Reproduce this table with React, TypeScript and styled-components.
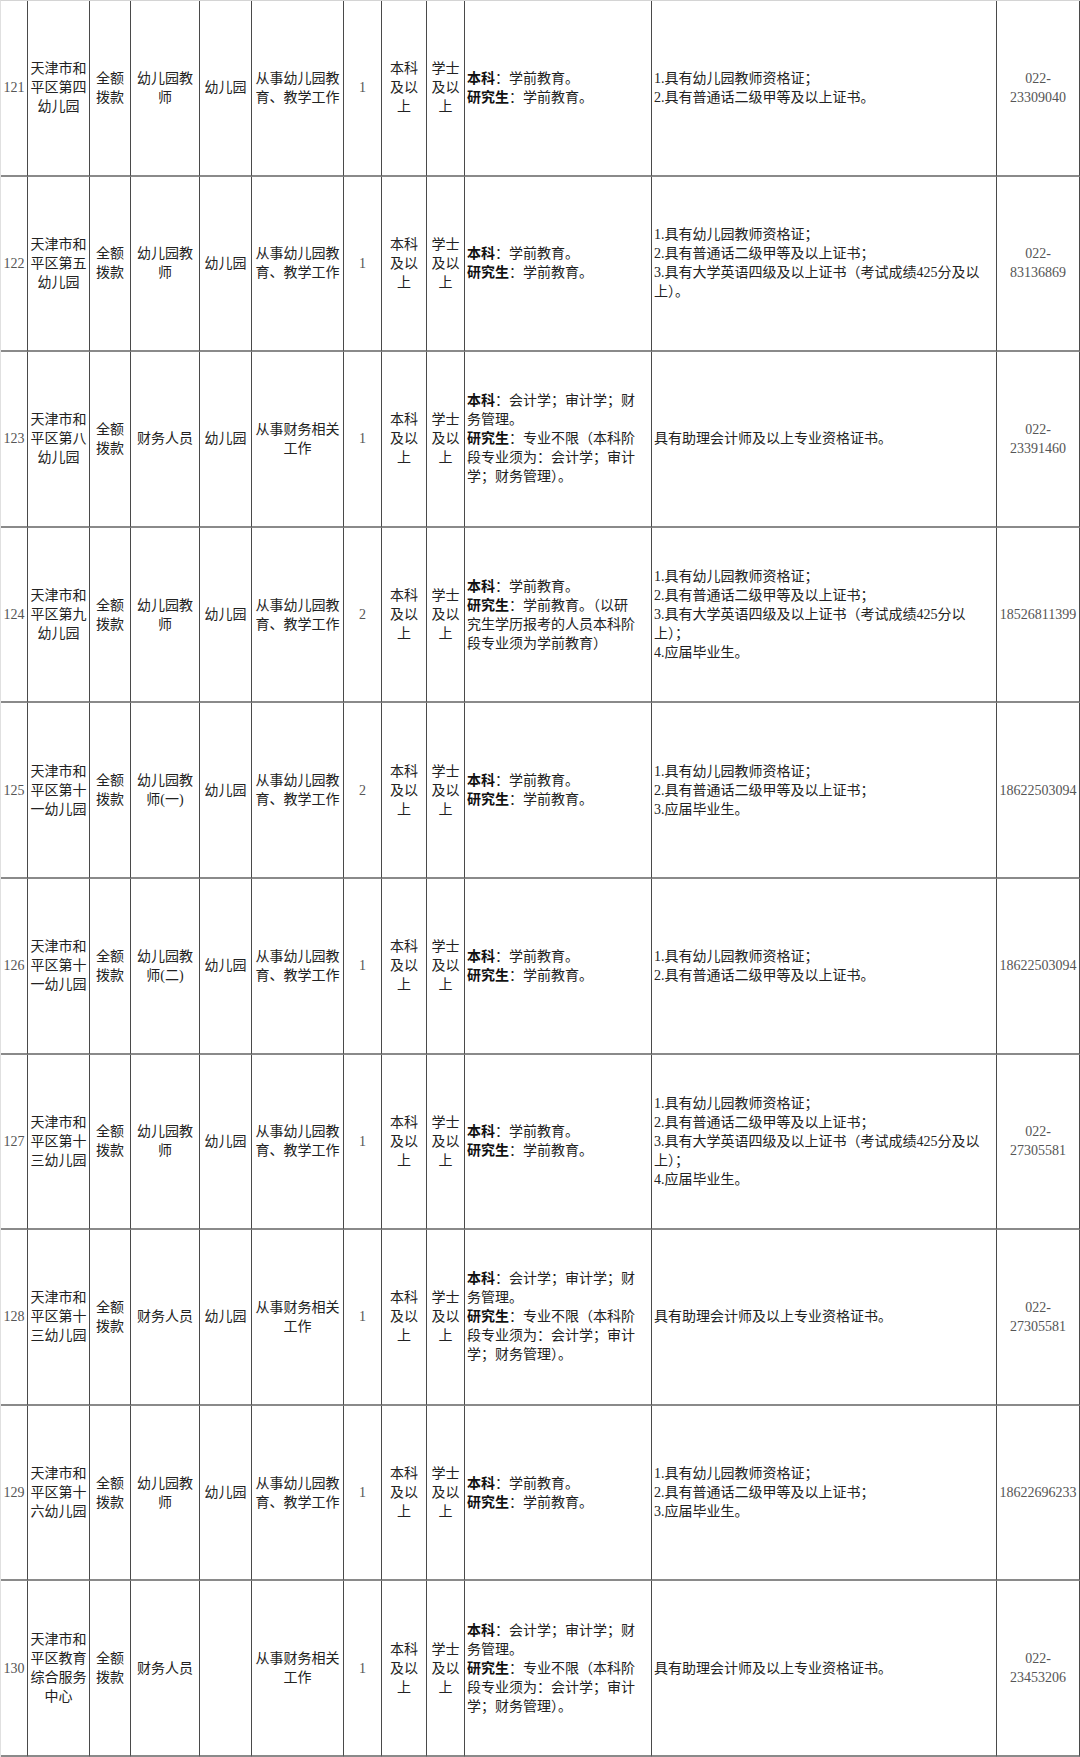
import React from "react";
import styled, { createGlobalStyle } from "styled-components";

const GlobalStyle = createGlobalStyle`
  html, body {
    margin: 0;
    padding: 0;
    background: #fff;
  }
  body {
    font-family: "Liberation Serif", "Noto Sans CJK SC", serif;
    color: #222;
  }
`;

const Table = styled.div`
  display: grid;
  grid-template-columns: 27px 62px 41px 69px 52px 92px 38px 45px 38px 187px 345px 83px;
  grid-template-rows: repeat(10, 1fr);
  width: 1080px;
  height: 1757px;
  box-sizing: border-box;
  border-top: 1px solid #d4d4d4;
  border-left: 1px solid #e0e0e0;
`;

const Cell = styled.div<{ $align?: "left" | "center"; $num?: boolean }>`
  display: flex;
  align-items: center;
  justify-content: ${({ $align }) => ($align === "left" ? "flex-start" : "center")};
  text-align: ${({ $align }) => ($align === "left" ? "left" : "center")};
  box-sizing: border-box;
  padding: 0 ${({ $align }) => ($align === "left" ? "2px" : "1px")};
  border-right: 1.5px solid #4a4a4a;
  border-bottom: 2px solid #8a8a8a;
  font-size: 14px;
  line-height: 19px;
  color: ${({ $num }) => ($num ? "#555" : "#222")};
  white-space: pre-line;
  overflow: hidden;
`;

const B = styled.b`
  font-weight: 700;
  color: #111;
`;

type Row = {
  no: string;
  org: string;
  kind: string;
  post: string;
  unit: string;
  duty: string;
  count: string;
  edu: string;
  degree: string;
  major: React.ReactNode;
  other: string;
  phone: string;
};

const teachMajor = (
  <span>
    <B>本科</B>：学前教育。{"\n"}
    <B>研究生</B>：学前教育。
  </span>
);

const financeMajor = (
  <span>
    <B>本科</B>：会计学；审计学；财{"\n"}务管理。{"\n"}
    <B>研究生</B>：专业不限（本科阶{"\n"}段专业须为：会计学；审计{"\n"}学；财务管理）。
  </span>
);

const teachDuty = "从事幼儿园教\n育、教学工作";
const financeDuty = "从事财务相关\n工作";
const financeOther = "具有助理会计师及以上专业资格证书。";
const edu = "本科\n及以\n上";
const degree = "学士\n及以\n上";

const rows: Row[] = [
  {
    no: "121",
    org: "天津市和\n平区第四\n幼儿园",
    kind: "全额\n拨款",
    post: "幼儿园教\n师",
    unit: "幼儿园",
    duty: teachDuty,
    count: "1",
    edu,
    degree,
    major: teachMajor,
    other: "1.具有幼儿园教师资格证；\n2.具有普通话二级甲等及以上证书。",
    phone: "022-\n23309040",
  },
  {
    no: "122",
    org: "天津市和\n平区第五\n幼儿园",
    kind: "全额\n拨款",
    post: "幼儿园教\n师",
    unit: "幼儿园",
    duty: teachDuty,
    count: "1",
    edu,
    degree,
    major: teachMajor,
    other:
      "1.具有幼儿园教师资格证；\n2.具有普通话二级甲等及以上证书；\n3.具有大学英语四级及以上证书（考试成绩425分及以\n上）。",
    phone: "022-\n83136869",
  },
  {
    no: "123",
    org: "天津市和\n平区第八\n幼儿园",
    kind: "全额\n拨款",
    post: "财务人员",
    unit: "幼儿园",
    duty: financeDuty,
    count: "1",
    edu,
    degree,
    major: financeMajor,
    other: financeOther,
    phone: "022-\n23391460",
  },
  {
    no: "124",
    org: "天津市和\n平区第九\n幼儿园",
    kind: "全额\n拨款",
    post: "幼儿园教\n师",
    unit: "幼儿园",
    duty: teachDuty,
    count: "2",
    edu,
    degree,
    major: (
      <span>
        <B>本科</B>：学前教育。{"\n"}
        <B>研究生</B>：学前教育。（以研{"\n"}究生学历报考的人员本科阶{"\n"}段专业须为学前教育）
      </span>
    ),
    other:
      "1.具有幼儿园教师资格证；\n2.具有普通话二级甲等及以上证书；\n3.具有大学英语四级及以上证书（考试成绩425分以\n上）；\n4.应届毕业生。",
    phone: "18526811399",
  },
  {
    no: "125",
    org: "天津市和\n平区第十\n一幼儿园",
    kind: "全额\n拨款",
    post: "幼儿园教\n师(一)",
    unit: "幼儿园",
    duty: teachDuty,
    count: "2",
    edu,
    degree,
    major: teachMajor,
    other: "1.具有幼儿园教师资格证；\n2.具有普通话二级甲等及以上证书；\n3.应届毕业生。",
    phone: "18622503094",
  },
  {
    no: "126",
    org: "天津市和\n平区第十\n一幼儿园",
    kind: "全额\n拨款",
    post: "幼儿园教\n师(二)",
    unit: "幼儿园",
    duty: teachDuty,
    count: "1",
    edu,
    degree,
    major: teachMajor,
    other: "1.具有幼儿园教师资格证；\n2.具有普通话二级甲等及以上证书。",
    phone: "18622503094",
  },
  {
    no: "127",
    org: "天津市和\n平区第十\n三幼儿园",
    kind: "全额\n拨款",
    post: "幼儿园教\n师",
    unit: "幼儿园",
    duty: teachDuty,
    count: "1",
    edu,
    degree,
    major: teachMajor,
    other:
      "1.具有幼儿园教师资格证；\n2.具有普通话二级甲等及以上证书；\n3.具有大学英语四级及以上证书（考试成绩425分及以\n上）；\n4.应届毕业生。",
    phone: "022-\n27305581",
  },
  {
    no: "128",
    org: "天津市和\n平区第十\n三幼儿园",
    kind: "全额\n拨款",
    post: "财务人员",
    unit: "幼儿园",
    duty: financeDuty,
    count: "1",
    edu,
    degree,
    major: financeMajor,
    other: financeOther,
    phone: "022-\n27305581",
  },
  {
    no: "129",
    org: "天津市和\n平区第十\n六幼儿园",
    kind: "全额\n拨款",
    post: "幼儿园教\n师",
    unit: "幼儿园",
    duty: teachDuty,
    count: "1",
    edu,
    degree,
    major: teachMajor,
    other: "1.具有幼儿园教师资格证；\n2.具有普通话二级甲等及以上证书；\n3.应届毕业生。",
    phone: "18622696233",
  },
  {
    no: "130",
    org: "天津市和\n平区教育\n综合服务\n中心",
    kind: "全额\n拨款",
    post: "财务人员",
    unit: "",
    duty: financeDuty,
    count: "1",
    edu,
    degree,
    major: financeMajor,
    other: financeOther,
    phone: "022-\n23453206",
  },
];

export default function App() {
  return (
    <>
      <GlobalStyle />
      <Table>
        {rows.map((r) => (
          <React.Fragment key={r.no}>
            <Cell $num>{r.no}</Cell>
            <Cell>{r.org}</Cell>
            <Cell>{r.kind}</Cell>
            <Cell>{r.post}</Cell>
            <Cell>{r.unit}</Cell>
            <Cell>{r.duty}</Cell>
            <Cell $num>{r.count}</Cell>
            <Cell>{r.edu}</Cell>
            <Cell>{r.degree}</Cell>
            <Cell $align="left">{r.major}</Cell>
            <Cell $align="left">{r.other}</Cell>
            <Cell $num>{r.phone}</Cell>
          </React.Fragment>
        ))}
      </Table>
    </>
  );
}
